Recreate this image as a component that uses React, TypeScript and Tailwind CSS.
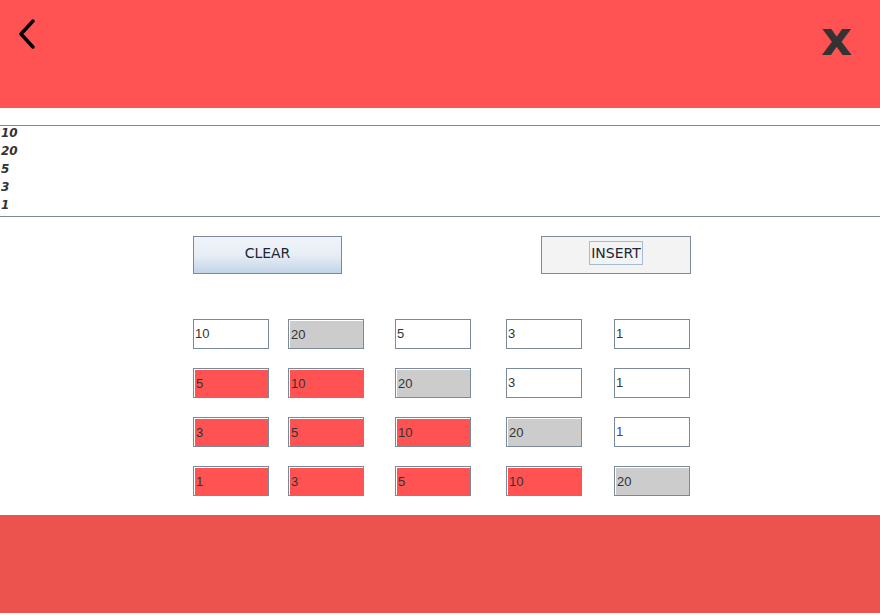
import React from "react";

type Cell = { value: string; tone: "white" | "red" | "gray"; blue?: boolean };

const W = (value: string, blue = false): Cell => ({ value, tone: "white", blue });
const R = (value: string): Cell => ({ value, tone: "red" });
const G = (value: string): Cell => ({ value, tone: "gray" });

const ROWS: Cell[][] = [
  [W("10"), G("20"), W("5"), W("3"), W("1")],
  [R("5"), R("10"), G("20"), W("3"), W("1")],
  [R("3"), R("5"), R("10"), G("20"), W("1", true)],
  [R("1"), R("3"), R("5"), R("10"), G("20")],
];

// column x offsets relative to the grid start (193px)
const COL_GAPS = ["ml-0", "ml-[19px]", "ml-[31px]", "ml-[35px]", "ml-[32px]"];

const LIST = ["10", "20", "5", "3", "1"];

function ArrayCell({ cell, className }: { cell: Cell; className: string }) {
  const fill =
    cell.tone === "red" ? "bg-[#ff5252]" : cell.tone === "gray" ? "bg-[#cccccc]" : "bg-white";
  return (
    <div className={`w-[76px] h-[30px] border border-[#7a8a99] bg-white ${className}`}>
      <div className={`w-full h-full ${cell.tone === "white" ? "" : "pt-px pl-px"}`}>
        <div
          className={`w-full h-full flex items-center pl-[1px] text-[13px] ${fill} ${
            cell.blue ? "text-[#3a2bff]" : "text-[#333333]"
          }`}
          style={{ fontFamily: '"Liberation Sans", Arial, sans-serif' }}
        >
          {cell.value}
        </div>
      </div>
    </div>
  );
}

export default function App() {
  return (
    <div className="w-[880px] h-[616px] bg-white overflow-hidden flex flex-col">
      {/* Header */}
      <div className="h-[108px] bg-[#ff5252] flex items-start justify-between shrink-0">
        <svg width="20" height="32" viewBox="0 0 20 32" className="mt-[18px] ml-[17px]">
          <path d="M16 3 L4 16 L16 29" stroke="#000" strokeWidth="3.5" fill="none" strokeLinecap="round" strokeLinejoin="round" />
        </svg>
        <span
          className="mt-[14px] mr-[28px] text-[48px] leading-none font-black text-[#333333]"
          style={{ fontFamily: '"DejaVu Sans", "Liberation Sans", sans-serif' }}
        >
          x
        </span>
      </div>

      {/* Output list */}
      <div className="mt-[17px] border-t border-b border-[#7a8a99] h-[92px]">
        <div className="-mt-[2px]">
          {LIST.map((n, i) => (
            <div
              key={i}
              className="h-[18px] leading-[18px] text-[12px] font-bold italic text-[#333333] pl-px"
              style={{ fontFamily: '"DejaVu Sans", "Liberation Sans", sans-serif' }}
            >
              {n}
            </div>
          ))}
        </div>
      </div>

      {/* Buttons */}
      <div className="flex mt-[19px] pl-[193px]">
        <button
          className="w-[149px] h-[38px] border border-[#7a8a99] bg-gradient-to-b from-[#f0f4f9] via-[#e8eef6] to-[#c2d4e7] text-[14px] font-medium text-[#1d2733] pb-[4px]"
          style={{ fontFamily: '"DejaVu Sans", "Liberation Sans", sans-serif' }}
        >
          CLEAR
        </button>
        <button
          className="ml-[199px] w-[150px] h-[38px] border border-[#7a8a99] bg-[#f3f3f3] flex items-center justify-center text-[14px] font-medium text-[#1d2733] pb-[4px]"
          style={{ fontFamily: '"DejaVu Sans", "Liberation Sans", sans-serif' }}
        >
          <span className="border border-[#a3bbd3] px-px leading-[22px]">INSERT</span>
        </button>
      </div>

      {/* Array grid */}
      <div className="mt-[45px] pl-[193px] flex flex-col gap-[19px]">
        {ROWS.map((row, r) => (
          <div key={r} className="flex">
            {row.map((cell, c) => (
              <ArrayCell key={c} cell={cell} className={COL_GAPS[c]} />
            ))}
          </div>
        ))}
      </div>

      {/* Footer */}
      <div className="mt-auto mb-[3px] h-[98px] bg-[#ec534f] shrink-0" />
    </div>
  );
}
